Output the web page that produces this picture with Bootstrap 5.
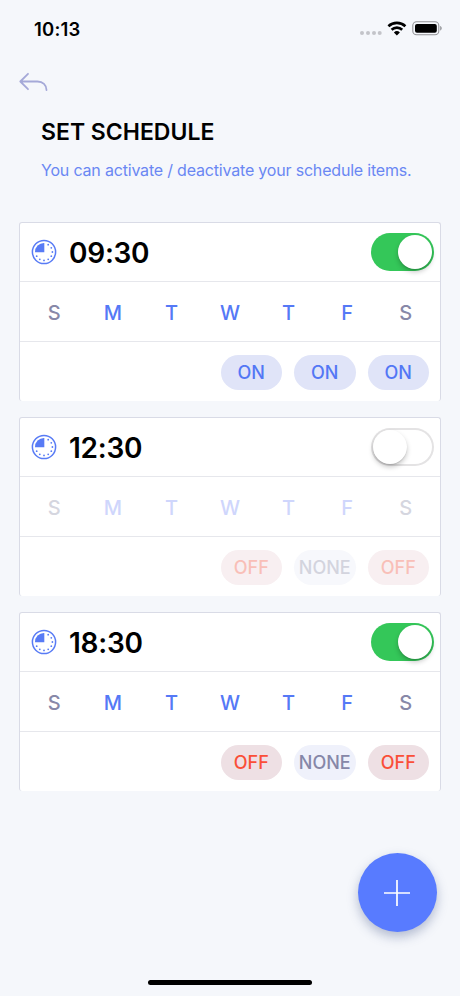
<!DOCTYPE html>
<html lang="en">
<head>
<meta charset="utf-8">
<meta name="viewport" content="width=device-width, initial-scale=1">
<title>Set schedule</title>
<link href="https://cdn.jsdelivr.net/npm/bootstrap@5.3.0/dist/css/bootstrap.min.css" rel="stylesheet">
<style>
body{background:#f5f7fb;font-family:Inter,"Liberation Sans",sans-serif;color:#000;line-height:1}
.phone{width:460px;height:996px;overflow:hidden}
.status{height:56px;padding:0 18px 0 34px}
.status-time{font-size:18.5px;font-weight:600;letter-spacing:.2px;padding-top:3px}
.back{margin:16px 0 0 19px;line-height:0;width:30px}
.heading{padding:26px 0 0 41px}
.heading h1{font-size:23px;font-weight:600;line-height:28px;letter-spacing:0}
.heading p{font-size:16px;line-height:20px;color:#6a87f3;letter-spacing:-.19px;margin-top:14px}
.schedules{gap:16px;padding:42px 19px 0}
.plan{height:179px;border:1px solid #d9dbe6;border-bottom:0;border-radius:3px;background:#fff}
.plan-top{height:59px;padding:0 6px 0 11px;border-bottom:1px solid #e6e7ec}
.plan-days{height:60px;padding:2px 5px 0;border-bottom:1px solid #e6e7ec;font-size:20px;font-weight:450;color:#5579f6}
.plan-days>:first-child,.plan-days>:last-child{color:#8788a8}
.plan-acts{height:60px;gap:12px;padding:1px 11px 0 0}
.plan-time{font-size:28px;font-weight:600;margin-left:12px;letter-spacing:-.25px;padding-top:1px}
.pill{width:61.5px;height:35.5px;font-size:18px;font-weight:500}
.pill-on{background:#e0e4f8;color:#5377f5}
.pill-off{background:#eee0e4;color:#fa4f38}
.pill-none{background:#eff1fb;color:#8687a8}
.dim .plan-days{color:#cfd6fc}
.dim .plan-days>:first-child,.dim .plan-days>:last-child{color:#d5d6df}
.dim .pill-off{background:#f8eff1;color:#f9bfb8}
.dim .pill-none{background:#f7f8fc;color:#d3d4de}
.toggle.form-check-input{width:63px;height:38px;margin:0;border:0;background:#34c759;border-radius:19px;box-shadow:none;padding:2px;appearance:none;display:flex;justify-content:flex-end}
.toggle::before{content:"";width:34px;height:34px;border-radius:50%;background:#fff;box-shadow:0 3px 5px rgba(0,0,0,.22),0 1px 1px rgba(0,0,0,.1)}
.toggle.form-check-input:not(:checked){background:#fff;box-shadow:inset 0 0 0 2px #e4e3e4;justify-content:flex-start}
.fab{left:357.5px;top:853px;width:79px;height:79px;background:#587bff;box-shadow:0 5px 11px rgba(70,90,140,.38)}
.home-bar{left:148px;top:980px;width:164px;height:5px;background:#000}
</style>
</head>
<body>
<svg width="0" height="0" class="position-absolute"><defs>
<g id="clock"><circle cx="13" cy="13" r="11.6" fill="none" stroke="#587bf5" stroke-width="1.5"/><path d="M13.300 13.200H4A9 9 0 0 1 13.300 4Z" fill="#587bf5"/>
<g fill="#587bf5"><circle cx="17.200" cy="5.700" r=".9"/><circle cx="20.300" cy="8.800" r=".9"/><circle cx="21.400" cy="13" r=".9"/><circle cx="20.300" cy="17.200" r=".9"/><circle cx="17.200" cy="20.300" r=".9"/><circle cx="13" cy="21.400" r=".9"/><circle cx="8.800" cy="20.300" r=".9"/><circle cx="5.700" cy="17.200" r=".9"/></g></g>
</defs></svg>
<main class="phone position-relative">
  <header class="status d-flex align-items-center justify-content-between">
    <span class="status-time">10:13</span>
    <svg width="84" height="20" viewBox="358 18 84 20" aria-hidden="true">
      <g fill="#c3c4c9"><circle cx="362" cy="33" r="2"/><circle cx="368" cy="33" r="2"/><circle cx="374" cy="33" r="2"/><circle cx="379.700" cy="33" r="2"/></g>
      <g fill="none" stroke="#000" stroke-width="2.600"><path d="M388.400 26.300a12.300 12.300 0 0 1 17 0"/><path d="M391.600 29.800a7.600 7.600 0 0 1 10.600 0"/></g>
      <path d="M393.900 32.400a4.400 4.400 0 0 1 6 0l-3 3Z"/>
      <rect x="412.800" y="21.800" width="26" height="13" rx="3.800" fill="none" stroke="#929397" stroke-width="1.100"/>
      <rect x="415" y="24" width="21.800" height="8.800" rx="2"/>
      <path d="M440.200 26v4.500c2-.7 2-3.800 0-4.500Z" fill="#929397"/>
    </svg>
  </header>
  <div class="back"><svg width="30" height="20" viewBox="0 0 30 20" fill="none" stroke="#a5a9d8" stroke-width="1.800" stroke-linecap="round" stroke-linejoin="round"><path d="M9 1.800 1.300 9.500 9 17.200M1.300 9.500H18.500c5.300 0 9 3.300 9 8.500"/></svg></div>
  <section class="heading">
    <h1 class="mb-0">SET SCHEDULE</h1>
    <p class="mb-0">You can activate / deactivate your schedule items.</p>
  </section>
  <section class="schedules d-flex flex-column">
    <article class="plan">
      <div class="plan-top d-flex align-items-center"><svg width="26" height="26"><use href="#clock"/></svg><span class="plan-time">09:30</span><input class="toggle form-check-input ms-auto" type="checkbox" role="switch" aria-label="09:30" checked></div>
      <div class="plan-days d-flex align-items-center text-center"><span class="flex-fill w-100">S</span><span class="flex-fill w-100">M</span><span class="flex-fill w-100">T</span><span class="flex-fill w-100">W</span><span class="flex-fill w-100">T</span><span class="flex-fill w-100">F</span><span class="flex-fill w-100">S</span></div>
      <div class="plan-acts d-flex align-items-center justify-content-end"><span class="pill pill-on rounded-pill d-flex align-items-center justify-content-center">ON</span><span class="pill pill-on rounded-pill d-flex align-items-center justify-content-center">ON</span><span class="pill pill-on rounded-pill d-flex align-items-center justify-content-center">ON</span></div>
    </article>
    <article class="plan dim">
      <div class="plan-top d-flex align-items-center"><svg width="26" height="26"><use href="#clock"/></svg><span class="plan-time">12:30</span><input class="toggle form-check-input ms-auto" type="checkbox" role="switch" aria-label="12:30"></div>
      <div class="plan-days d-flex align-items-center text-center"><span class="flex-fill w-100">S</span><span class="flex-fill w-100">M</span><span class="flex-fill w-100">T</span><span class="flex-fill w-100">W</span><span class="flex-fill w-100">T</span><span class="flex-fill w-100">F</span><span class="flex-fill w-100">S</span></div>
      <div class="plan-acts d-flex align-items-center justify-content-end"><span class="pill pill-off rounded-pill d-flex align-items-center justify-content-center">OFF</span><span class="pill pill-none rounded-pill d-flex align-items-center justify-content-center">NONE</span><span class="pill pill-off rounded-pill d-flex align-items-center justify-content-center">OFF</span></div>
    </article>
    <article class="plan">
      <div class="plan-top d-flex align-items-center"><svg width="26" height="26"><use href="#clock"/></svg><span class="plan-time">18:30</span><input class="toggle form-check-input ms-auto" type="checkbox" role="switch" aria-label="18:30" checked></div>
      <div class="plan-days d-flex align-items-center text-center"><span class="flex-fill w-100">S</span><span class="flex-fill w-100">M</span><span class="flex-fill w-100">T</span><span class="flex-fill w-100">W</span><span class="flex-fill w-100">T</span><span class="flex-fill w-100">F</span><span class="flex-fill w-100">S</span></div>
      <div class="plan-acts d-flex align-items-center justify-content-end"><span class="pill pill-off rounded-pill d-flex align-items-center justify-content-center">OFF</span><span class="pill pill-none rounded-pill d-flex align-items-center justify-content-center">NONE</span><span class="pill pill-off rounded-pill d-flex align-items-center justify-content-center">OFF</span></div>
    </article>
  </section>
  <button class="fab btn border-0 rounded-circle position-absolute p-0 d-flex align-items-center justify-content-center" type="button" aria-label="Add schedule"><svg width="28" height="28" viewBox="0 0 28 28" stroke="#fff" stroke-width="1.700"><path d="M14 1v26M1 14h26"/></svg></button>
  <div class="home-bar rounded-pill position-absolute"></div>
</main>
<script src="https://cdn.jsdelivr.net/npm/bootstrap@5.3.0/dist/js/bootstrap.bundle.min.js"></script>
</body>
</html>
